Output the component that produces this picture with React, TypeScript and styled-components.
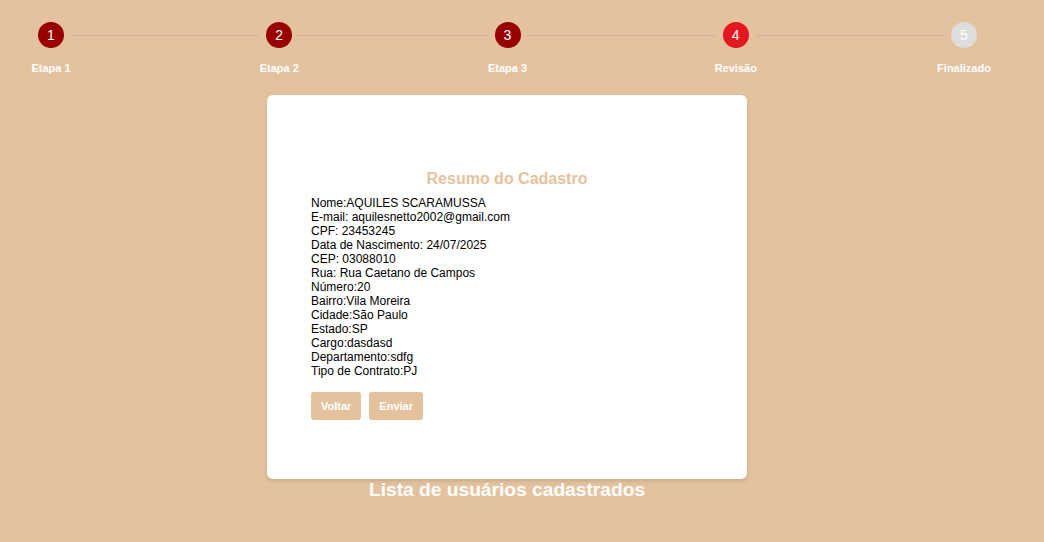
import React from 'react';
import styled, { createGlobalStyle } from 'styled-components';

const GlobalStyle = createGlobalStyle`
  html, body {
    margin: 0;
    padding: 0;
    background: #e4c29d;
    font-family: "Liberation Sans", Arial, sans-serif;
  }
`;

const Page = styled.div`
  width: 1014px;
  min-height: 542px;
  display: flex;
  flex-direction: column;
  align-items: center;
`;

const Stepper = styled.div`
  align-self: stretch;
  display: flex;
  align-items: flex-start;
  padding: 22px 37px 0 38px;
  height: 95px;
  box-sizing: border-box;
`;

const Step = styled.div`
  width: 26px;
  display: flex;
  flex-direction: column;
  align-items: center;
`;

type StepState = 'done' | 'current' | 'todo';

const Circle = styled.div<{ $state: StepState }>`
  width: 26px;
  height: 26px;
  border-radius: 50%;
  display: flex;
  align-items: center;
  justify-content: center;
  color: #fff;
  font-size: 14px;
  background: ${(p) =>
    p.$state === 'done' ? '#990000' : p.$state === 'current' ? '#e3171e' : '#dddddd'};
`;

const StepLabel = styled.div`
  margin-top: 14px;
  white-space: nowrap;
  font-size: 11px;
  font-weight: bold;
  color: #fff;
`;

const Connector = styled.div`
  flex: 1;
  height: 1px;
  margin: 12.5px 7px 0 6px;
  background: #c2b9ad;
`;

const Card = styled.div`
  width: 480px;
  height: 384px;
  box-sizing: border-box;
  padding: 75px 44px 0;
  background: #fff;
  border-radius: 6px;
  box-shadow: 0 2px 4px rgba(0, 0, 0, 0.12);
`;

const Title = styled.h3`
  margin: 0 0 8px;
  text-align: center;
  font-size: 16px;
  font-weight: bold;
  color: #e4c29d;
`;

const Line = styled.div`
  font-size: 12px;
  color: #000;
`;

const Actions = styled.div`
  display: flex;
  gap: 8px;
  margin-top: 14px;
`;

const Button = styled.button`
  border: none;
  border-radius: 3px;
  background: #e4c29d;
  color: #fff;
  font-family: inherit;
  font-size: 11px;
  font-weight: bold;
  line-height: 14px;
  padding: 7px 10px;
  cursor: pointer;
`;

const ListTitle = styled.h2`
  margin: 0;
  font-size: 19.2px;
  font-weight: bold;
  color: #fff;
`;

const steps: { n: number; label: string; state: StepState }[] = [
  { n: 1, label: 'Etapa 1', state: 'done' },
  { n: 2, label: 'Etapa 2', state: 'done' },
  { n: 3, label: 'Etapa 3', state: 'done' },
  { n: 4, label: 'Revisão', state: 'current' },
  { n: 5, label: 'Finalizado', state: 'todo' },
];

const resumo = [
  'Nome:AQUILES SCARAMUSSA',
  'E-mail: aquilesnetto2002@gmail.com',
  'CPF: 23453245',
  'Data de Nascimento: 24/07/2025',
  'CEP: 03088010',
  'Rua: Rua Caetano de Campos',
  'Número:20',
  'Bairro:Vila Moreira',
  'Cidade:São Paulo',
  'Estado:SP',
  'Cargo:dasdasd',
  'Departamento:sdfg',
  'Tipo de Contrato:PJ',
];

const App: React.FC = () => {
  return (
    <>
      <GlobalStyle />
      <Page>
        <Stepper>
          {steps.map((s, i) => (
            <React.Fragment key={s.n}>
              {i > 0 && <Connector />}
              <Step>
                <Circle $state={s.state}>{s.n}</Circle>
                <StepLabel>{s.label}</StepLabel>
              </Step>
            </React.Fragment>
          ))}
        </Stepper>
        <Card>
          <Title>Resumo do Cadastro</Title>
          {resumo.map((l) => (
            <Line key={l}>{l}</Line>
          ))}
          <Actions>
            <Button>Voltar</Button>
            <Button>Enviar</Button>
          </Actions>
        </Card>
        <ListTitle>Lista de usuários cadastrados</ListTitle>
      </Page>
    </>
  );
};

export default App;
